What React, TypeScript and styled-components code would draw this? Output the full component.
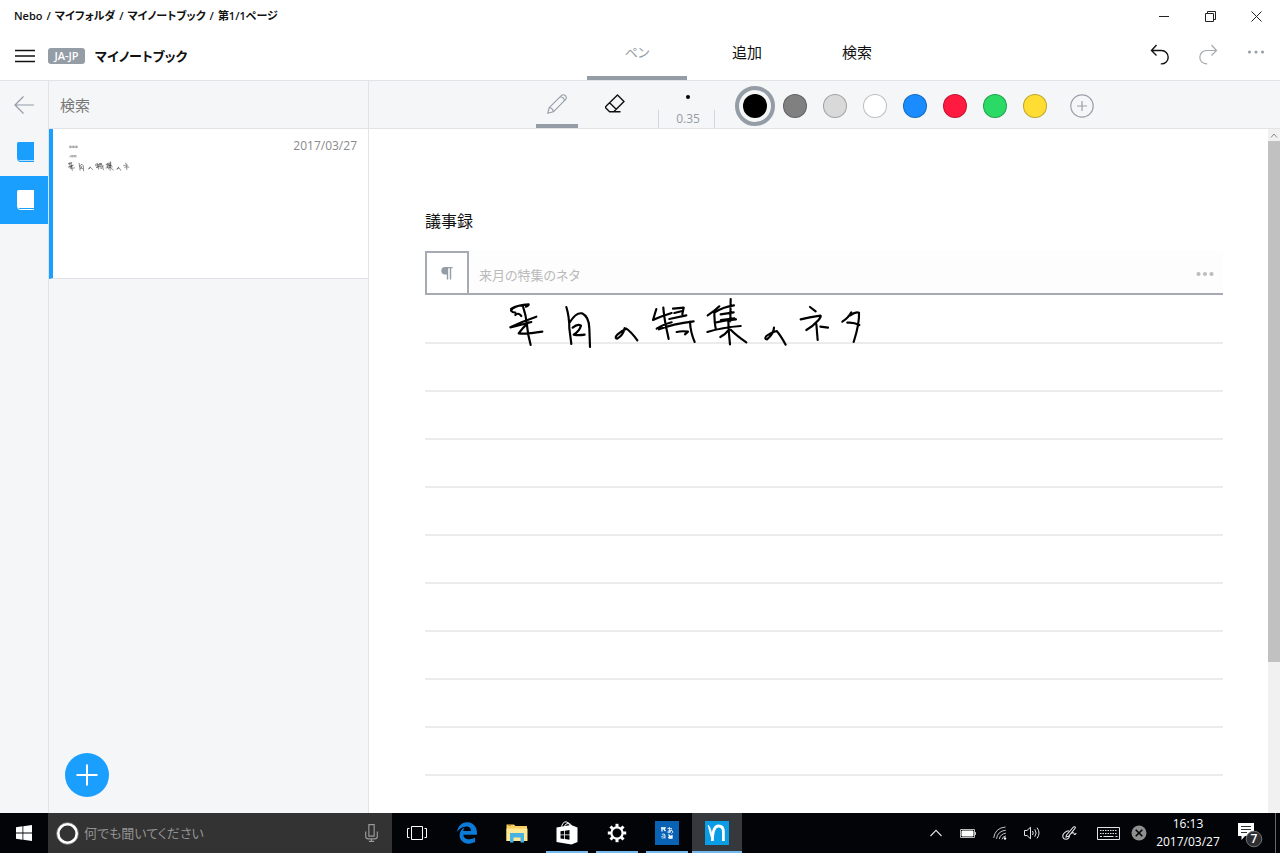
import React from 'react';
import styled, { createGlobalStyle, css } from 'styled-components';
import { FaEdgeLegacy } from 'react-icons/fa';

const GlobalStyle = createGlobalStyle`
  *, *::before, *::after { box-sizing: border-box; }
  html, body, #root { height: 100%; }
  body {
    margin: 0;
    background: #fff;
    color: #111;
    font-family: "Open Sans", "Noto Sans CJK JP", sans-serif;
    font-feature-settings: "palt";
    font-size: 14px;
    line-height: 20px;
  }
  button, input { font: inherit; font-feature-settings: inherit; color: inherit; }
  h1, h2, p, ul { margin: 0; padding: 0; }
`;

const slate = '#949ca6';
const blue = '#1b9fff';
const panel = '#f4f6f8';
const line = '#e1e3e6';

const Page = styled.div`
  min-height: 100vh;
  display: flex;
  flex-direction: column;
`;

const PlainButton = styled.button`
  display: flex;
  align-items: center;
  justify-content: center;
  padding: 0;
  border: 0;
  background: none;
  flex: none;
`;

const Drawing = styled.svg`
  display: block;
  flex: none;
  fill: none;
  stroke: currentColor;
`;

/* Window title bar */

const TitleBar = styled.div`
  display: flex;
  height: 32px;
  justify-content: space-between;
  align-items: center;
`;

const Breadcrumb = styled.nav`
  display: flex;
  padding-left: 14px;
  font-size: 11px;
  font-weight: 600;
`;

const Separator = styled.span`
  padding: 0 4px;
`;

const WindowControls = styled.div`
  display: flex;
  padding-right: 1px;
`;

const WindowButton = styled(PlainButton)`
  width: 46px;
  height: 32px;
  color: #222;
`;

/* Application header */

const Header = styled.header`
  display: flex;
  height: 49px;
  border-bottom: 1px solid ${line};
`;

const HeaderStart = styled.div`
  flex: 1;
  display: flex;
  align-items: center;
  padding-left: 15px;
`;

const LanguageBadge = styled.span`
  margin: 0 10px 0 13px;
  width: 37px;
  height: 16px;
  border-radius: 3px;
  background: ${slate};
  color: #fff;
  font-size: 11px;
  font-weight: 600;
  line-height: 16px;
  text-align: center;
`;

const NotebookTitle = styled.h1`
  font-size: 13px;
  font-weight: 600;
  line-height: 20px;
`;

const Tabs = styled.div`
  display: flex;
  gap: 10px;
`;

const Tab = styled(PlainButton)<{ $active?: boolean }>`
  width: 100px;
  height: 48px;
  padding-bottom: ${p => (p.$active ? 4 : 8)}px;
  border-bottom: ${p => (p.$active ? `4px solid ${slate}` : '0')};
  color: ${p => (p.$active ? slate : '#111')};
  font-size: ${p => (p.$active ? 13 : 15)}px;
`;

const HeaderEnd = styled.div`
  width: 373px;
  display: flex;
  justify-content: flex-end;
`;

const HeaderButton = styled(PlainButton)<{ $tone: string; $raised?: boolean }>`
  width: 48px;
  height: 48px;
  padding-bottom: ${p => (p.$raised ? 8 : 2)}px;
  color: ${p => p.$tone};
`;

/* Body */

const Body = styled.div`
  flex: 1;
  display: flex;
`;

const Rail = styled.nav`
  width: 49px;
  border-right: 1px solid ${line};
  background: ${panel};
`;

const RailButton = styled(PlainButton)<{ $selected?: boolean; $first?: boolean }>`
  width: 48px;
  height: ${p => (p.$first ? 47 : 48)}px;
  padding-left: ${p => (p.$first ? 0 : 3)}px;
  background: ${p => (p.$selected ? blue : 'transparent')};
  color: ${p => (p.$selected ? '#fff' : p.$first ? slate : blue)};
`;

const Sidebar = styled.aside`
  width: 320px;
  display: flex;
  flex-direction: column;
  border-right: 1px solid ${line};
  background: ${panel};
`;

const SearchField = styled.input`
  height: 48px;
  padding: 0 11px;
  border: 0;
  border-bottom: 1px solid ${line};
  background: transparent;
  font-size: 15px;
  outline: 0;
  &::placeholder { color: #777; opacity: 1; }
`;

const PageCard = styled.a`
  height: 150px;
  display: flex;
  justify-content: space-between;
  padding: 7px 11px 0 15px;
  border-left: 4px solid ${blue};
  border-bottom: 1px solid ${line};
  background: #fff;
  text-decoration: none;
`;

const PageDate = styled.time`
  color: #8a8a8a;
  font-size: 12px;
`;

const AddButton = styled(PlainButton)`
  width: 44px;
  height: 44px;
  margin: auto 0 16px 16px;
  border-radius: 50%;
  background: ${blue};
  color: #fff;
`;

const Workspace = styled.main`
  flex: 1;
  min-width: 0;
  display: flex;
  flex-direction: column;
`;

const ToolBar = styled.div`
  display: flex;
  justify-content: center;
  height: 48px;
  padding-right: 20px;
  border-bottom: 1px solid ${line};
  background: ${panel};
`;

const ToolButton = styled(PlainButton)<{ $active?: boolean }>`
  width: 42px;
  height: 47px;
  padding-top: 2px;
  margin-right: 16px;
  border-bottom: 4px solid ${p => (p.$active ? slate : 'transparent')};
  color: ${p => (p.$active ? slate : '#111')};
`;

const Thickness = styled(PlainButton)`
  flex-direction: column;
  justify-content: flex-end;
  width: 57px;
  margin: 0 20px 0 6px;
  gap: 11px;
  color: ${slate};
  font-size: 12px;
`;

const ThicknessDot = styled.span`
  width: 4px;
  height: 4px;
  margin-left: 4px;
  border-radius: 50%;
  background: #000;
`;

const ThicknessValue = styled.span`
  width: 100%;
  height: 18px;
  padding-left: 4px;
  border: solid #d3d6da;
  border-width: 0 1px;
  line-height: 18px;
`;

const Palette = styled.div`
  display: flex;
  align-items: center;
  padding-top: 3px;
`;

const SwatchButton = styled(PlainButton)<{ $selected?: boolean }>`
  width: 40px;
  height: 40px;
  border-radius: 50%;
  ${p => p.$selected && css`border: 4px solid ${slate};`}
`;

const SwatchFill = styled.span<{ $color: string }>`
  width: 24px;
  height: 24px;
  border: 1px solid rgba(0, 0, 0, 0.25);
  border-radius: 50%;
  background: ${p => p.$color};
`;

const AddColor = styled(PlainButton)`
  margin-left: 15px;
  color: #9ba0aa;
`;

const Canvas = styled.div`
  flex: 1;
  display: flex;
`;

const Sheet = styled.article`
  flex: 1;
  padding: 80px 45px 32px 56px;
`;

const SheetTitle = styled.h2`
  font-size: 16px;
  font-weight: 400;
  line-height: 24px;
`;

const TextBlockBar = styled.div`
  display: flex;
  align-items: center;
  height: 44px;
  margin-top: 18px;
  border-bottom: 2px solid #a5aab3;
  background: #fdfdfd;
`;

const ParagraphButton = styled(PlainButton)`
  width: 44px;
  height: 44px;
  border: 2px solid #a5aab3;
  background: #fff;
  color: ${slate};
  align-self: flex-start;
`;

const Recognized = styled.p`
  flex: 1;
  padding: 6px 0 0 10px;
  color: #bababa;
  font-size: 13px;
`;

const MoreButton = styled(PlainButton)`
  width: 36px;
  height: 40px;
  padding-top: 4px;
  color: #bdbdbd;
`;

const RuledArea = styled.div`
  position: relative;
  padding-top: 1px;
`;

const Rule = styled.div`
  height: 48px;
  border-bottom: 2px solid #ebebeb;
`;

const Ink = styled.div`
  position: absolute;
  top: 1px;
  left: 75px;
`;

const ScrollTrack = styled.div`
  width: 12px;
  display: flex;
  flex-direction: column;
  background: #f1f1f1;
  color: #8a8a8a;
`;

const ScrollArrow = styled(PlainButton)`
  width: 12px;
  height: 12px;
`;

const ScrollRoom = styled.div`
  flex: 1;
  display: flex;
  flex-direction: column;
`;

const ScrollThumb = styled.div`
  flex: 31;
  background: #c1c1c1;
`;

const ScrollRest = styled.div`
  flex: 9;
`;

/* Taskbar */

const TaskBar = styled.footer`
  display: flex;
  height: 40px;
  background: #020408;
  color: #fff;
`;

const StartButton = styled(PlainButton)`
  width: 48px;
`;

const Cortana = styled.label`
  width: 344px;
  display: flex;
  align-items: center;
  gap: 5px;
  padding: 0 12px 0 8px;
  background: #333;
  color: #999;
`;

const CortanaInput = styled.input`
  flex: 1;
  min-width: 0;
  padding: 0;
  border: 0;
  background: transparent;
  font-size: 13px;
  outline: 0;
  &::placeholder { color: #929292; opacity: 1; }
`;

const AppButton = styled(PlainButton)<{ $state?: 'open' | 'current' }>`
  position: relative;
  width: 50px;
  height: 40px;
  background: ${p => (p.$state === 'current' ? '#35383c' : 'transparent')};
  &::after {
    content: '';
    position: absolute;
    bottom: 0;
    left: ${p => (p.$state === 'current' ? 0 : 4)}px;
    right: ${p => (p.$state === 'current' ? 0 : 4)}px;
    height: 2px;
    background: ${p => (p.$state ? '#76b9ed' : 'transparent')};
  }
`;

const Tray = styled.div`
  display: flex;
  align-items: stretch;
  margin-left: auto;
`;

const TrayButton = styled(PlainButton)<{ $width: number }>`
  width: ${p => p.$width}px;
  color: #e2e2e2;
`;

const NotificationButton = styled(TrayButton)`
  padding: 4px 0 0 4px;
`;

const Clock = styled(PlainButton)`
  width: 72px;
  flex-direction: column;
  font-size: 12px;
  line-height: 18px;
`;

const ShowDesktop = styled(PlainButton)`
  width: 5px;
  margin-left: 3px;
  border-left: 1px solid #666;
`;

const InkStrokes = () => (
  <g strokeLinecap="round" strokeLinejoin="round">
    <g transform="translate(-272 -288)">
      <path d="M305 327Q325 314 358 313Q358 318 350 320M320 320Q307 325 305 332Q309 338 318 338M318 345Q326 336 336 348M341 319Q350 345 353 376Q355 402 364 435M381 350Q342 363 303 382Q325 378 366 366M358 367Q340 383 328 400Q350 403 399 395" />
      <path d="M471 321Q480 350 480 385L486 432M482 366Q500 337 518 340Q539 350 540 385L542 441M490 383Q505 370 515 377Q510 394 493 404Q508 407 526 404" />
      <path d="M646 384Q642 405 624 416Q614 415 625 403Q640 390 651 386Q665 395 684 421" />
    </g>
    <g transform="translate(387 -33)">
      <path d="M82 72L72 105Q90 96 128 84M103 68Q104 85 110 120L119 162M83 131Q100 120 128 112M132 71Q150 69 164 68L160 88M136 84L160 78M121 102L172 91M90 133Q130 117 194 109M183 110Q184 140 197 171M143 141Q160 137 177 140L168 148" />
      <path d="M271 64Q257 78 236 91M256 78Q256 110 260 130M257 82Q285 65 315 61M305 42L304 109M275 88L314 82M276 105L316 100M257 113Q285 105 321 103M235 141Q280 127 335 123M298 110Q299 145 303 178M297 137Q289 149 274 156M305 134Q323 152 352 172" />
      <path d="M435 128Q434 147 414 163Q405 163 412 153Q426 142 443 138Q454 150 470 179" />
      <path d="M543 66L560 79M515 103Q540 97 574 92Q578 93 568 106Q551 125 532 135M562 117L566 165M574 125L597 128" />
      <path d="M667 82Q658 99 640 110M664 91Q680 79 690 83Q692 115 674 171M655 113Q674 111 691 120" />
    </g>
  </g>
);

const BookIcon = () => (
  <Drawing width="17" height="20" viewBox="0 0 17 20">
    <path d="M2.5 0H17V18H2A2 2 0 0 1 0 16V2A2 2 0 0 1 2.5 0Z" fill="currentColor" stroke="none" />
    <path d="M1 16.5Q0.5 19.5 3 19.5H17" />
    <path d="M2 18.5H17" stroke={blue} strokeOpacity="0.3" />
  </Drawing>
);

const Dots = ({ size, step, radius }: { size: number; step: number; radius: number }) => (
  <Drawing width={size} height="6" viewBox={`0 0 ${size} 6`}>
    {[-1, 0, 1].map(i => (
      <circle key={i} cx={size / 2 + i * step} cy="3" r={radius} fill="currentColor" stroke="none" />
    ))}
  </Drawing>
);

const swatches = [
  ['黒', '#000000'],
  ['灰', '#808080'],
  ['薄灰', '#d9d9d9'],
  ['白', '#ffffff'],
  ['青', '#1a8cff'],
  ['赤', '#ff1a40'],
  ['緑', '#2bd965'],
  ['黄', '#ffdd33'],
];

const trail = ['Nebo', 'マイフォルダ', 'マイノートブック', '第1/1ページ'];

export default function App() {
  return (
    <Page>
      <GlobalStyle />
      <TitleBar>
        <Breadcrumb>
          {trail.map((name, i) => (
            <React.Fragment key={name}>
              {i > 0 && <Separator>/</Separator>}
              <span>{name}</span>
            </React.Fragment>
          ))}
        </Breadcrumb>
        <WindowControls>
          <WindowButton aria-label="最小化">
            <Drawing width="10" height="10" viewBox="0 0 10 10"><path d="M0 5.5H10" /></Drawing>
          </WindowButton>
          <WindowButton aria-label="元に戻す (縮小)">
            <Drawing width="11" height="11" viewBox="0 0 11 11">
              <path d="M0.5 2.5H8.5V10.5H0.5ZM2.5 2.5V0.5H10.5V8.5H8.5" />
            </Drawing>
          </WindowButton>
          <WindowButton aria-label="閉じる">
            <Drawing width="11" height="11" viewBox="0 0 11 11"><path d="M0.5 0.5L10.5 10.5M10.5 0.5L0.5 10.5" /></Drawing>
          </WindowButton>
        </WindowControls>
      </TitleBar>

      <Header>
        <HeaderStart>
          <PlainButton aria-label="メニュー">
            <Drawing width="20" height="14" viewBox="0 0 20 14" strokeWidth="1.6">
              <path d="M0 1.5H20M0 7H20M0 12.5H20" />
            </Drawing>
          </PlainButton>
          <LanguageBadge>JA-JP</LanguageBadge>
          <NotebookTitle>マイノートブック</NotebookTitle>
        </HeaderStart>
        <Tabs role="tablist">
          <Tab role="tab" aria-selected $active>ペン</Tab>
          <Tab role="tab">追加</Tab>
          <Tab role="tab">検索</Tab>
        </Tabs>
        <HeaderEnd>
          <HeaderButton aria-label="元に戻す" $tone="#111">
            <Drawing width="20" height="22" viewBox="0 0 20 22" strokeWidth="1.4">
              <path d="M6.5 1L1.5 6.5L6.5 11.5M1.5 6.5H11.5A6.7 6.7 0 0 1 11.5 19.9H10.8" />
            </Drawing>
          </HeaderButton>
          <HeaderButton aria-label="やり直す" $tone="#a5a9ae">
            <Drawing width="20" height="22" viewBox="0 0 20 22" strokeWidth="1.2">
              <path d="M13.5 1L18.5 6.5L13.5 11.5M18.5 6.5H8.5A6.7 6.7 0 0 0 8.5 19.9H9.2" />
            </Drawing>
          </HeaderButton>
          <HeaderButton aria-label="その他" $tone={slate} $raised>
            <Dots size={18} step={6.5} radius={1.5} />
          </HeaderButton>
        </HeaderEnd>
      </Header>

      <Body>
        <Rail>
          <RailButton aria-label="戻る" $first>
            <Drawing width="20" height="18" viewBox="0 0 20 18" strokeWidth="1.2">
              <path d="M9.5 0.5L1 9L9.5 17.5M1 9H20" />
            </Drawing>
          </RailButton>
          <RailButton aria-label="ノートブック 1"><BookIcon /></RailButton>
          <RailButton aria-label="ノートブック 2" $selected><BookIcon /></RailButton>
        </Rail>

        <Sidebar>
          <SearchField type="text" aria-label="検索" placeholder="検索" />
          <PageCard href="#page-1">
            <Drawing width="62" height="36" viewBox="0 0 326 189" color="#222">
              <path d="M6 54H52M6 60H52M12 50V64M28 50V64M44 50V64M12 103H46M6 109H46M22 100V112M36 100V112" strokeWidth="3" stroke="#888" />
              <g transform="translate(-8 132) scale(0.333)" strokeWidth="8"><InkStrokes /></g>
            </Drawing>
            <PageDate>2017/03/27</PageDate>
          </PageCard>
          <AddButton aria-label="新しいページ">
            <Drawing width="22" height="22" viewBox="0 0 22 22" strokeWidth="2"><path d="M11 0.5V21.5M0.5 11H21.5" /></Drawing>
          </AddButton>
        </Sidebar>

        <Workspace>
          <ToolBar>
            <ToolButton aria-label="ペン" $active>
              <Drawing width="20" height="20" viewBox="0 0 20 20" strokeWidth="1.1" strokeLinejoin="round">
                <path d="M0.7 19.3L2.2 13.6L14.6 1.3Q16.4 0.1 18.4 1.7Q20 3.6 18.7 5.4L6.4 17.8ZM2.2 13.6Q5.8 14 6.4 17.8M13.2 2.7Q17 3 17.3 6.8" />
              </Drawing>
            </ToolButton>
            <ToolButton aria-label="消しゴム">
              <Drawing width="20" height="20" viewBox="0 0 20 20" strokeWidth="1.4" strokeLinejoin="round">
                <path d="M12.5 1L19 7.5L8.7 17.8H4.6L0.8 14Q0.3 12.8 1 12.2ZM4.6 8.8L11.2 15.3M4.6 17.8H15.5" />
              </Drawing>
            </ToolButton>
            <Thickness aria-label="太さ">
              <ThicknessDot />
              <ThicknessValue>0.35</ThicknessValue>
            </Thickness>
            <Palette>
              {swatches.map(([name, color], i) => (
                <SwatchButton key={color} aria-label={name} aria-pressed={i === 0} $selected={i === 0}>
                  <SwatchFill $color={color} />
                </SwatchButton>
              ))}
              <AddColor aria-label="色を追加">
                <Drawing width="24" height="24" viewBox="0 0 24 24" strokeWidth="1.2">
                  <circle cx="12" cy="12" r="11.2" />
                  <path d="M12 7V17M7 12H17" />
                </Drawing>
              </AddColor>
            </Palette>
          </ToolBar>

          <Canvas>
            <Sheet>
              <SheetTitle>議事録</SheetTitle>
              <TextBlockBar>
                <ParagraphButton aria-label="段落">
                  <Drawing width="12" height="13" viewBox="0 0 12 13">
                    <path d="M4.5 0.5H11.5M6.5 0.5V12.5M9.5 0.5V12.5" strokeWidth="1.4" />
                    <path d="M7 0H4A3.7 3.7 0 0 0 4 7.4H7Z" fill="currentColor" stroke="none" />
                  </Drawing>
                </ParagraphButton>
                <Recognized>来月の特集のネタ</Recognized>
                <MoreButton aria-label="ブロックのメニュー">
                  <Dots size={18} step={6.5} radius={2.1} />
                </MoreButton>
              </TextBlockBar>
              <RuledArea>
                {Array.from({ length: 10 }, (_, i) => <Rule key={i} />)}
                <Ink>
                  <Drawing width="370" height="54" viewBox="0 0 1110 162" strokeWidth="6.5" color="#000" role="img" aria-label="来月の特集のネタ">
                    <InkStrokes />
                  </Drawing>
                </Ink>
              </RuledArea>
            </Sheet>
            <ScrollTrack>
              <ScrollArrow aria-label="上へスクロール">
                <Drawing width="8" height="5" viewBox="0 0 8 5"><path d="M1 4.5L4 1L7 4.5" /></Drawing>
              </ScrollArrow>
              <ScrollRoom><ScrollThumb /><ScrollRest /></ScrollRoom>
            </ScrollTrack>
          </Canvas>
        </Workspace>
      </Body>

      <TaskBar>
        <StartButton aria-label="スタート">
          <Drawing width="16" height="16" viewBox="0 0 16 16">
            <path d="M0 2.2L6.5 1.3V7.6H0ZM7.3 1.2L16 0V7.6H7.3ZM0 8.4H6.5V14.7L0 13.8ZM7.3 8.4H16V16L7.3 14.8Z" fill="#fff" stroke="none" />
          </Drawing>
        </StartButton>
        <Cortana>
          <Drawing width="23" height="23" viewBox="0 0 23 23">
            <circle cx="11.5" cy="11.5" r="10.8" stroke="#888" />
            <circle cx="11.5" cy="11.5" r="9.2" stroke="#fff" strokeWidth="2.6" />
          </Drawing>
          <CortanaInput type="text" aria-label="何でも聞いてください" placeholder="何でも聞いてください" />
          <Drawing width="17" height="18" viewBox="0 0 13 17" strokeWidth="1.1">
            <path d="M4 0.6H9V11.4H4ZM1 7V11.5Q1 14 3.5 14H9.5Q12 14 12 11.5V7M6.5 14V16.4M4 16.4H9" />
          </Drawing>
        </Cortana>
        <AppButton aria-label="タスクビュー">
          <Drawing width="22" height="14" viewBox="0 0 22 14">
            <path d="M5.5 0.5H16.5V13.5H5.5ZM3.5 2.5H1.5V11.5H3.5M18.5 2.5H20.5V11.5H18.5" />
          </Drawing>
        </AppButton>
        <AppButton aria-label="Edge"><FaEdgeLegacy size={22} color="#0c7ad8" /></AppButton>
        <AppButton aria-label="エクスプローラー">
          <Drawing width="22" height="19" viewBox="0 0 22 19">
            <path d="M0.5 0.5H8L9.5 2H21V17H0.5Z" fill="#f5cf62" stroke="none" />
            <path d="M0.5 4.5H21.5V17H0.5Z" fill="#ffe994" stroke="none" />
            <path d="M2.2 1.4H5" stroke="#c98b18" />
            <path d="M4 9H18V18.5H14.5V13.5H7.5V18.5H4Z" fill="#48b2e3" stroke="none" />
          </Drawing>
        </AppButton>
        <AppButton aria-label="ストア" $state="open">
          <Drawing width="22" height="24" viewBox="0 0 22 24">
            <path d="M0.5 6.5L15 4L21.5 6.5V21L15.5 23.5L0.5 21Z" fill="#fff" stroke="none" />
            <path d="M5.5 7Q6 1 10 0.8Q13 0.6 14 5M8 6Q9.5 2 12.5 2.4Q15.5 2.8 16 6" stroke="#fff" />
            <path d="M4.5 10.3L8.2 9.8V13.4H4.5ZM9 9.7L13.5 9V13.4H9ZM4.5 14.2H8.2V18L4.5 17.5ZM9 14.2H13.5V18.8L9 18.1Z" fill="#020408" stroke="none" />
          </Drawing>
        </AppButton>
        <AppButton aria-label="設定" $state="open">
          <Drawing width="20" height="20" viewBox="-10 -10 20 20">
            <circle r="5.6" stroke="#fff" strokeWidth="2.2" />
            {[0, 45, 90, 135, 180, 225, 270, 315].map(a => (
              <path key={a} d="M0 -6V-9.2" stroke="#fff" strokeWidth="3" transform={`rotate(${a})`} />
            ))}
          </Drawing>
        </AppButton>
        <AppButton aria-label="辞書" $state="open">
          <Drawing width="24" height="24" viewBox="0 0 24 24">
            <path d="M0 0H24V24H0Z" fill="#0a62b5" stroke="none" />
            <path d="M6 7H10L9 8.5L10.5 10M7 7V10.5M13.5 13.5L17 17M17 14V17H13.5M15 14.5L13.5 17" stroke="#fff" strokeWidth="1.3" />
            <path d="M6.8 13.4Q10 12 10 14.2V17.5M10 14.8Q6.5 14.6 6.5 16.2Q7 18 10 16.4M12.5 7.5H17M14.4 6V9.8Q14.5 11.5 15.5 12M16.5 8.5Q15.5 12 13 11.8Q12 10 15 9.3Q18 9 17.8 11.2Q17.3 12.3 16.4 12.6" stroke="#dcebfa" strokeWidth="0.9" />
          </Drawing>
        </AppButton>
        <AppButton aria-label="Nebo" $state="current">
          <Drawing width="24" height="24" viewBox="0 0 24 24">
            <path d="M0 0H24V24H0Z" fill="#0a9de6" stroke="none" />
            <path d="M3.2 4.2Q7 8 7.4 20Q5 13 3.2 4.2Z" fill="#fff" stroke="#fff" strokeWidth="0.8" />
            <path d="M7.4 20Q7.6 5 13.6 5Q18.4 5 18.4 11V20" stroke="#fff" strokeWidth="2.8" />
          </Drawing>
        </AppButton>
        <Tray>
          <TrayButton $width={32} aria-label="隠れているインジケーター">
            <Drawing width="12" height="8" viewBox="0 0 12 8" strokeWidth="1.1"><path d="M0.5 7L6 1.3L11.5 7" /></Drawing>
          </TrayButton>
          <TrayButton $width={32} aria-label="バッテリー">
            <Drawing width="16" height="9" viewBox="0 0 16 9">
              <path d="M0.5 0.5H14.5V8.5H0.5ZM15.5 3V6" stroke="#bbb" /><path d="M2 2H13V7H2Z" fill="#fff" stroke="#fff" />
            </Drawing>
          </TrayButton>
          <TrayButton $width={32} aria-label="Wi-Fi">
            <Drawing width="14" height="14" viewBox="0 0 14 14" color="#c4c4c4">
              <path d="M0.7 12Q2 2 12.5 1M3.5 12.8Q4.6 5 12.8 4.2M6.3 13Q7.3 8 12.8 7.2M9 13.3Q9.6 10.5 12.8 10" />
              <circle cx="12" cy="12.5" r="1.2" fill="#fff" stroke="none" />
            </Drawing>
          </TrayButton>
          <TrayButton $width={32} aria-label="音量">
            <Drawing width="16" height="14" viewBox="0 0 16 14">
              <path d="M0.5 4.5H3L6.5 1.2V12.8L3 9.5H0.5ZM8.5 5Q10 7 8.5 9M10.8 3.3Q13.4 7 10.8 10.7M13 1.6Q17 7 13 12.4" />
            </Drawing>
          </TrayButton>
          <TrayButton $width={42} aria-label="Windows Ink">
            <Drawing width="15" height="14" viewBox="0 0 15 14" strokeWidth="1.1">
              <path d="M4.5 9L11.5 1Q12.8 0.3 13.4 1.5Q13.5 2.3 6.5 10.3L4 11ZM7 4.8Q2 5.5 0.8 9.5Q0.5 13.4 4.4 13.2Q7.5 12.5 7.4 9.4M9.5 7.2Q12 6 12.2 8.2Q12.8 9.2 14.3 7" />
            </Drawing>
          </TrayButton>
          <TrayButton $width={36} aria-label="タッチキーボード">
            <Drawing width="23" height="13" viewBox="0 0 23 13">
              <path d="M0.5 0.5H22.5V12.5H0.5Z" />
              <path d="M3 3.5H20.5M3 6.5H20.5" strokeDasharray="1.5 1" /><path d="M3 9.5H5M6.5 9.5H16.5M18.5 9.5H20.5" />
            </Drawing>
          </TrayButton>
          <TrayButton $width={26} aria-label="入力なし">
            <Drawing width="16" height="16" viewBox="0 0 16 16">
              <circle cx="8" cy="8" r="7.5" fill="#8f8f8f" stroke="none" /><path d="M4.7 4.7L11.3 11.3M11.3 4.7L4.7 11.3" stroke="#020408" strokeWidth="1.6" />
            </Drawing>
          </TrayButton>
          <Clock><span>16:13</span><span>2017/03/27</span></Clock>
          <NotificationButton $width={48} aria-label="通知 7 件">
            <Drawing width="26" height="26" viewBox="0 0 26 26">
              <path d="M1 1H17V14H8L4.5 18V14H1Z" fill="#fff" stroke="none" />
              <path d="M4 4.5H14M4 7.5H14M4 10.5H10" stroke="#333" />
              <circle cx="17" cy="17" r="7.8" fill="#2e2f32" stroke="#707070" />
              <text x="17" y="21" fill="#fff" stroke="none" fontSize="12" fontWeight="600" textAnchor="middle">7</text>
            </Drawing>
          </NotificationButton>
          <ShowDesktop aria-label="デスクトップの表示" />
        </Tray>
      </TaskBar>
    </Page>
  );
}
